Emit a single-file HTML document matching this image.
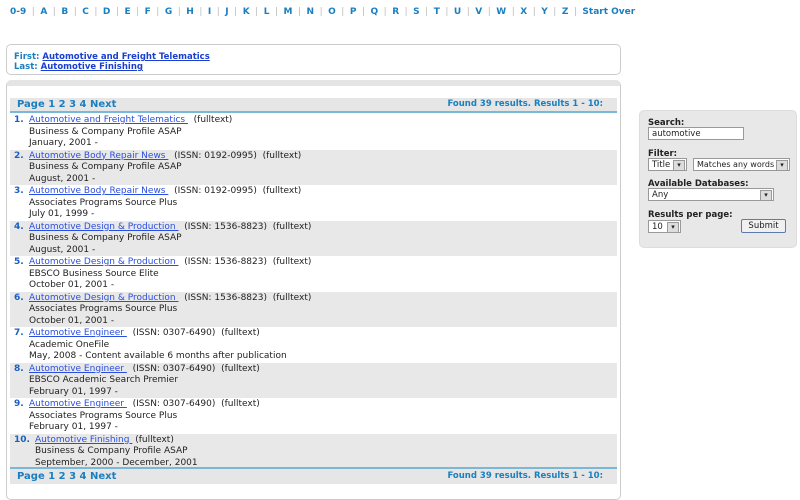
<!DOCTYPE html>
<html><head><meta charset="utf-8"><style>
*{margin:0;padding:0;box-sizing:border-box}
body{width:800px;height:484px;overflow:hidden;background:#fff;font-family:"DejaVu Sans","Liberation Sans",sans-serif;font-size:9px;color:#222;position:relative}
a{color:#1a3fd0;text-decoration:underline}
.nav{position:absolute;top:7px;left:10px;font-weight:bold;color:#1a7fc0;font-size:9px;white-space:nowrap}
.nav span{display:inline-block}
.nav .s{color:#bbb;font-weight:normal;margin:0 5.5px}
.fl{position:absolute;left:6px;top:44px;width:615px;height:31px;border:1px solid #ccc;border-radius:5px;padding:7px 7px;line-height:10px;color:#1a7fc0;font-weight:bold;font-size:8.5px}
.fl a{color:#1a3fd0}
.box{position:absolute;left:6px;top:80px;width:615px;height:420px;border:1px solid #ccc;border-radius:5px;border-top:6px solid #e4e4e4}
.bar{position:absolute;left:10px;width:607px;height:13px;background:#e6e6e6;color:#1a7fc0;font-weight:bold;line-height:13px;padding:0 7px}
.bar .p{font-size:10px}
.bar .r{position:absolute;right:14px;top:0;font-size:8.5px}
.row{position:absolute;left:10px;width:607px;height:35.5px;padding:1px 0 0 19px;line-height:11.7px}
.row.g{background:#e8e8e8}
.row b{position:absolute;left:4px;top:1px;color:#1a5fc0}
.row a{color:#2a4fe0}
.side{position:absolute;left:639px;top:110px;width:158px;height:138px;background:#e8e8e8;border:1px solid #ddd;border-radius:5px;padding:7px 8px;font-weight:bold;font-size:8.5px;color:#222}
.inp{position:absolute;background:#fff;border:1px solid #999;font-weight:normal;font-size:8.5px;padding:1px 3px;height:13px;line-height:10px;overflow:hidden;white-space:nowrap}
.sel:after{content:"▾";position:absolute;right:1px;top:1px;width:10px;height:9px;background:#ddd;border:1px solid #999;font-size:7px;line-height:8px;text-align:center}
.btn{position:absolute;left:101px;top:108px;width:45px;height:14px;border:1px solid #5a7ab0;border-radius:2px;background:#f0f0f0;font-weight:normal;text-align:center;line-height:12px}
</style></head><body>
<div class="nav"><span>0-9</span><span class="s">|</span><span>A</span><span class="s">|</span><span>B</span><span class="s">|</span><span>C</span><span class="s">|</span><span>D</span><span class="s">|</span><span>E</span><span class="s">|</span><span>F</span><span class="s">|</span><span>G</span><span class="s">|</span><span>H</span><span class="s">|</span><span>I</span><span class="s">|</span><span>J</span><span class="s">|</span><span>K</span><span class="s">|</span><span>L</span><span class="s">|</span><span>M</span><span class="s">|</span><span>N</span><span class="s">|</span><span>O</span><span class="s">|</span><span>P</span><span class="s">|</span><span>Q</span><span class="s">|</span><span>R</span><span class="s">|</span><span>S</span><span class="s">|</span><span>T</span><span class="s">|</span><span>U</span><span class="s">|</span><span>V</span><span class="s">|</span><span>W</span><span class="s">|</span><span>X</span><span class="s">|</span><span>Y</span><span class="s">|</span><span>Z</span><span class="s">|</span><span>Start Over</span></div>
<div class="fl">First: <a>Automotive and Freight Telematics</a><br>Last: <a>Automotive Finishing</a></div>
<div class="box"></div>
<div class="bar" style="top:98px;border-bottom:2px solid #7ab8d8;height:15px"><span class="p">Page 1 2 3 4 Next</span><span class="r">Found 39 results. Results 1 - 10:</span></div>
<div class="row" style="top:114px"><b>1.</b><a>Automotive and Freight Telematics&nbsp;</a> &nbsp;(fulltext)<br>Business &amp; Company Profile ASAP<br>January, 2001 -</div>
<div class="row g" style="top:149.5px"><b>2.</b><a>Automotive Body Repair News&nbsp;</a> &nbsp;(ISSN: 0192-0995) &nbsp;(fulltext)<br>Business &amp; Company Profile ASAP<br>August, 2001 -</div>
<div class="row" style="top:185px"><b>3.</b><a>Automotive Body Repair News&nbsp;</a> &nbsp;(ISSN: 0192-0995) &nbsp;(fulltext)<br>Associates Programs Source Plus<br>July 01, 1999 -</div>
<div class="row g" style="top:220.5px"><b>4.</b><a>Automotive Design &amp; Production&nbsp;</a> &nbsp;(ISSN: 1536-8823) &nbsp;(fulltext)<br>Business &amp; Company Profile ASAP<br>August, 2001 -</div>
<div class="row" style="top:256px"><b>5.</b><a>Automotive Design &amp; Production&nbsp;</a> &nbsp;(ISSN: 1536-8823) &nbsp;(fulltext)<br>EBSCO Business Source Elite<br>October 01, 2001 -</div>
<div class="row g" style="top:291.5px"><b>6.</b><a>Automotive Design &amp; Production&nbsp;</a> &nbsp;(ISSN: 1536-8823) &nbsp;(fulltext)<br>Associates Programs Source Plus<br>October 01, 2001 -</div>
<div class="row" style="top:327px"><b>7.</b><a>Automotive Engineer&nbsp;</a> &nbsp;(ISSN: 0307-6490) &nbsp;(fulltext)<br>Academic OneFile<br>May, 2008 - Content available 6 months after publication</div>
<div class="row g" style="top:362.5px"><b>8.</b><a>Automotive Engineer&nbsp;</a> &nbsp;(ISSN: 0307-6490) &nbsp;(fulltext)<br>EBSCO Academic Search Premier<br>February 01, 1997 -</div>
<div class="row" style="top:398px"><b>9.</b><a>Automotive Engineer&nbsp;</a> &nbsp;(ISSN: 0307-6490) &nbsp;(fulltext)<br>Associates Programs Source Plus<br>February 01, 1997 -</div>
<div class="row g" style="top:433.5px;padding-left:25px"><b>10.</b><a>Automotive Finishing&nbsp;</a> (fulltext)<br>Business &amp; Company Profile ASAP<br>September, 2000 - December, 2001</div>
<div class="bar" style="top:467px;border-top:2px solid #7ab8d8;height:17px;line-height:15px"><span class="p">Page 1 2 3 4 Next</span><span class="r" style="top:0">Found 39 results. Results 1 - 10:</span></div>
<div class="side">
<div style="position:absolute;top:7px;left:8px">Search:</div>
<div class="inp" style="left:8px;top:16px;width:96px">automotive</div>
<div style="position:absolute;top:38px;left:8px">Filter:</div>
<div class="inp sel" style="left:8px;top:47px;width:39px">Title</div>
<div class="inp sel" style="left:53px;top:47px;width:97px;font-size:8px">Matches any words</div>
<div style="position:absolute;top:68px;left:8px">Available Databases:</div>
<div class="inp sel" style="left:8px;top:77px;width:126px">Any</div>
<div style="position:absolute;top:99px;left:8px">Results per page:</div>
<div class="inp sel" style="left:8px;top:109px;width:33px">10</div>
<div class="btn">Submit</div>
</div>
</body></html>
